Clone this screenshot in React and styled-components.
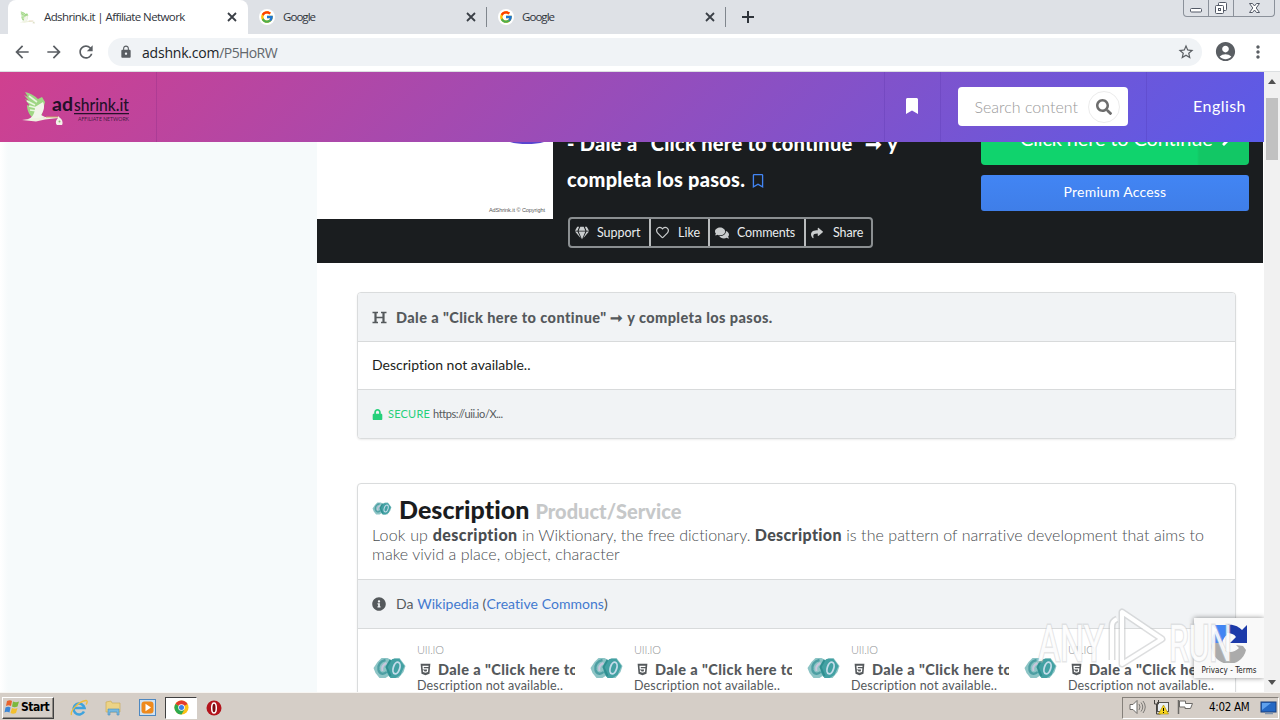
import React from 'react';
import styled, { createGlobalStyle } from 'styled-components';
import {
  FaBookmark,
  FaRegBookmark,
  FaSearch,
  FaGem,
  FaRegHeart,
  FaComments,
  FaShare,
  FaChevronRight,
  FaLock,
  FaInfoCircle,
  FaHtml5,
} from 'react-icons/fa';
import {
  MdArrowBack,
  MdArrowForward,
  MdRefresh,
  MdLock,
  MdStarBorder,
  MdAccountCircle,
  MdMoreVert,
} from 'react-icons/md';
import { FcGoogle } from 'react-icons/fc';

const GlobalStyle = createGlobalStyle`
  * {
    box-sizing: border-box;
  }

  body {
    margin: 0;
    overflow: hidden;
    font-family: Lato, 'Liberation Sans', sans-serif;
    font-variant-ligatures: none;
  }

  svg {
    display: block;
    flex: none;
  }
`;

const Screen = styled.div`
  display: flex;
  flex-direction: column;
  width: 1280px;
  height: 720px;
  overflow: hidden;
  background: #fff;
`;

const Text = styled.span`
  font-family: ${({ $font }) => $font || 'inherit'};
  font-size: ${({ $size }) => $size}px;
  font-weight: ${({ $weight }) => $weight || 400};
  letter-spacing: ${({ $ls }) => $ls || 0}px;
  color: ${({ $color }) => $color || 'inherit'};
  white-space: nowrap;
`;

/* browser chrome */

const TabStrip = styled.div`
  display: flex;
  height: 34px;
  flex: none;
  padding-left: 8px;
  background: #dee1e6;
`;

const Tab = styled.div`
  display: flex;
  align-items: center;
  width: ${({ $active }) => ($active ? 240 : 239)}px;
  padding: 0 9px 0 11px;
  border-radius: 8px 8px 0 0;
  background: ${({ $active }) => ($active ? '#fff' : 'transparent')};
  color: #2f343b;

  > ${Text} {
    padding-bottom: 1px;
  }
`;

const TabIcon = styled.span`
  display: flex;
  align-items: center;
  justify-content: center;
  width: 16px;
  height: 16px;
  margin-right: ${({ $gap }) => $gap}px;
  border-radius: 50%;
  background: #fff;
`;

const TabClose = styled.span`
  margin-left: auto;
`;

const TabDivider = styled.div`
  width: 1px;
  height: 20px;
  margin: 7px 0 0 -1px;
  background: #80868d;
`;

const NewTab = styled.div`
  display: flex;
  align-items: center;
  margin-left: 15px;
  color: #2f343b;
`;

const WindowButtons = styled.div`
  display: flex;
  height: 17px;
  margin: 0 5px 0 auto;
  border: 1px solid #8b919a;
  border-top: 0;
  border-radius: 0 0 4px 4px;
`;

const WindowButton = styled.div`
  display: flex;
  align-items: center;
  justify-content: center;
  width: ${({ $w }) => $w}px;

  & + & {
    border-left: 1px solid #8b919a;
  }
`;

const Toolbar = styled.div`
  display: flex;
  align-items: center;
  height: 38px;
  flex: none;
  padding: 0 12px 2px;
  border-bottom: 1px solid #dcdfe1;
  color: #5a5e63;
  gap: 12px;
`;

const AddressBar = styled.div`
  display: flex;
  align-items: center;
  flex: 1;
  height: 28px;
  padding: 0 7px 0 11px;
  border-radius: 14px;
  background: #f0f3f6;
`;

const ProfileIcon = styled(MdAccountCircle)`
  margin-right: -1px;
`;

const Url = styled.div`
  flex: 1;
  margin-left: 9px;
  color: #202428;
`;

/* page */

const Viewport = styled.div`
  display: flex;
  height: 620px;
  flex: none;
  position: relative;
`;

const Page = styled.div`
  display: flex;
  flex-direction: column;
  width: 1264px;
  height: 620px;
  overflow: hidden;
`;

const Header = styled.header`
  display: flex;
  align-items: center;
  height: 70px;
  flex: none;
  background: linear-gradient(135deg, #d0408f 0%, #5a5be8 100%);
  color: #fff;
`;

const Brand = styled.div`
  display: flex;
  width: 157px;
  height: 70px;
  padding: 17px 0 0 20px;
  border-right: 1px solid rgba(80, 20, 110, 0.16);
`;

const HeaderCell = styled.div`
  display: flex;
  align-items: center;
  justify-content: ${({ $end }) => ($end ? 'flex-end' : 'center')};
  width: ${({ $w }) => $w}px;
  height: 70px;
  padding: 0 ${({ $end }) => ($end ? 18 : 2)}px 2px 0;
  margin-left: ${({ $push }) => ($push ? 'auto' : 0)};
  border-left: 1px solid rgba(60, 30, 140, 0.16);

  > ${Text} {
    padding-bottom: 2px;
  }
`;

const SearchBox = styled.div`
  display: flex;
  align-items: center;
  justify-content: space-between;
  width: 170px;
  height: 39px;
  padding: 1px 8px 0 17px;
  border-radius: 4px;
  background: #fff;
`;

const SearchButton = styled.div`
  display: flex;
  align-items: center;
  justify-content: center;
  width: 32px;
  height: 32px;
  border: 1px solid #ececec;
  border-radius: 50%;
  color: #6d6d6d;
`;

const Body = styled.div`
  display: flex;
  height: 550px;
  overflow: hidden;
`;

const Aside = styled.aside`
  width: 317px;
  flex: none;
  background: linear-gradient(90deg, #fff 0, #f6fafb 8px);
`;

const Main = styled.main`
  width: 947px;
  flex: none;
`;

const Hero = styled.section`
  display: flex;
  align-items: flex-start;
  width: 946px;
  height: 121px;
  overflow: hidden;
  background: #1a1d1f;
  color: #fff;
`;

const Cover = styled.div`
  display: flex;
  flex-direction: column;
  align-items: flex-end;
  justify-content: space-between;
  width: 236px;
  height: 77px;
  padding: 0 8px 6px 0;
  background: #fff;
`;

const CoverArc = styled.svg`
  margin-right: 1px;
`;

const HeroText = styled.div`
  width: 428px;
  padding-left: 14px;
`;

const HeroTitle = styled.h1`
  margin: -16px 0 0;
  line-height: 36px;
`;

const TitleRow = styled.div`
  display: flex;
  align-items: center;
  height: 36px;

  > ${Text} {
    padding-bottom: 2px;
  }

  svg {
    margin: 2px 0 0 1px;
  }
`;

const ActionGroup = styled.div`
  display: flex;
  width: 305px;
  height: 31px;
  margin: 19px 0 0 1px;
  border: 2px solid #8b8f91;
  border-radius: 4px;
`;

const Action = styled.div`
  display: flex;
  align-items: center;
  width: ${({ $w }) => $w}px;
  padding-left: 5px;
  gap: ${({ $gap }) => $gap}px;
  color: #e9ecee;

  svg {
    color: #c9cccd;
  }

  & + & {
    border-left: 2px solid #b9bcbd;
  }
`;

const HeroButtons = styled.div`
  width: 268px;
`;

const ContinueButton = styled.div`
  display: flex;
  width: 268px;
  height: 56px;
  margin: -33px 0 10px;
  padding: 2px 0 0 39px;
  align-items: center;
  gap: 5px;
  border-radius: 4px;
  overflow: hidden;
  background: linear-gradient(90deg, #10d36d 216px, #12c765 218px);
`;

const PremiumButton = styled.div`
  display: flex;
  align-items: center;
  justify-content: center;
  height: 36px;
  padding-bottom: 3px;
  border-radius: 3px;
  background: linear-gradient(#4285f4, #3f7ee8);
`;

const Card = styled.section`
  width: 879px;
  margin: ${({ $top }) => $top}px 0 0 40px;
  border: 1px solid #dadcdd;
  border-radius: 4px;
  overflow: hidden;
  background: #fff;
  box-shadow: 0 1px 2px rgba(0, 0, 0, 0.08);
  color: #55595c;
`;

const CardRow = styled.div`
  display: flex;
  align-items: center;
  height: ${({ $h }) => $h}px;
  padding: 0 14px;
  background: ${({ $muted }) => ($muted ? '#f1f3f5' : '#fff')};

  & + & {
    border-top: 1px solid #d8dadb;
  }

  > ${Text} {
    padding-bottom: ${({ $lift }) => $lift || 0}px;
  }
`;

const RowIcon = styled.span`
  margin-right: ${({ $gap }) => $gap}px;
`;

const Summary = styled.div`
  height: 95px;
  padding: 9px 14px 0;
`;

const SummaryTitle = styled.div`
  display: flex;
  align-items: baseline;
  height: 32px;
  line-height: 32px;

  svg {
    align-self: flex-start;
    margin: 9px 7px 0 0;
  }
`;

const SummaryLine = styled.div`
  height: 19px;
  line-height: 19px;
  white-space: nowrap;
  color: #4a4e51;
`;

const SourceRow = styled(CardRow)`
  border-top: 1px solid #d8dadb;
  border-bottom: 1px solid #d8dadb;
`;

const RelatedGrid = styled.div`
  display: grid;
  grid-template-columns: repeat(4, 217px);
  height: 80px;
  padding: 12px 0 0 14px;
`;

const Related = styled.article`
  display: flex;

  > svg {
    margin: 16px 10px 0 0;
  }
`;

const RelatedText = styled.div`
  display: flex;
  flex-direction: column;
  width: 158px;
  overflow: hidden;
`;

const RelatedHost = styled.div`
  display: flex;
  height: 18px;
  line-height: 17px;
`;

const RelatedTitle = styled.div`
  display: flex;
  align-items: center;
  height: 20px;
  padding-left: 2px;
  gap: 6px;
`;

const RelatedBody = styled.div`
  display: flex;
  height: 15px;
  line-height: 13px;
`;

const ScrollBar = styled.div`
  display: flex;
  flex-direction: column;
  align-items: center;
  justify-content: space-between;
  width: 16px;
  height: 620px;
  padding: 7px 0 7px;
  background: #f1f1f1;
`;

const ScrollTrack = styled.div`
  flex: 1;
  width: 12px;
  padding-top: 14px;
`;

const ScrollThumb = styled.div`
  height: 62px;
  background: #c1c1c1;
`;

const CaptchaBadge = styled.div`
  position: absolute;
  top: 546px;
  left: 1194px;
  display: flex;
  flex-direction: column;
  align-items: center;
  width: 70px;
  height: 60px;
  padding-top: 5px;
  gap: 3px;
  background: #f9f9f9;
  box-shadow: 0 0 5px rgba(0, 0, 0, 0.45);
  clip-path: inset(-6px 0 -6px -6px);
`;

const Watermark = styled.svg`
  position: absolute;
  top: 532px;
  left: 1030px;
`;

/* taskbar */

const TaskBar = styled.div`
  display: flex;
  align-items: center;
  height: 28px;
  flex: none;
  padding: 2px 1px 0 2px;
  border-top: 1px solid #f7f5f2;
  background: #d5cec7;
`;

const StartButton = styled.div`
  display: flex;
  align-items: center;
  width: 52px;
  height: 22px;
  padding: 0 0 1px 1px;
  border: 1px solid;
  border-color: #fff #404040 #404040 #fff;
  box-shadow: inset -1px -1px 0 #8f8a84;
`;

const TaskItem = styled.div`
  display: flex;
  align-items: center;
  justify-content: center;
  width: ${({ $w }) => $w}px;
  height: 22px;
  margin-left: ${({ $ml }) => $ml}px;
  border: 1px solid ${({ $active }) => ($active ? '#404040' : 'transparent')};
  border-right-color: ${({ $active }) => ($active ? '#fff' : 'transparent')};
  border-bottom-color: ${({ $active }) => ($active ? '#fff' : 'transparent')};
  background: ${({ $active }) => ($active ? '#fff' : 'transparent')};
`;

const Tray = styled.div`
  display: flex;
  align-items: center;
  width: 157px;
  height: 22px;
  margin-left: auto;
  padding-left: 6px;
  border: 1px solid;
  border-color: #85807a #fff #fff #85807a;
`;

const TraySlot = styled.div`
  display: flex;
  width: ${({ $w }) => $w}px;
  padding-bottom: 1px;
`;

const UI_FONT = "'Open Sans', 'Noto Sans', sans-serif";
const TAHOMA = "'DejaVu Sans Condensed', 'DejaVu Sans', sans-serif";

const Stork = ({ width, height }) => (
  <svg width={width} height={height} viewBox="0 0 44 36">
    <path d="M4 2c5 1 10 4 13 7l4-2 3 5-3 12c0 3-3 5-7 5-5-2-8-8-8-14l3 1-5-7 4 2-5-6 4 2z" fill="#9fd684" />
    <path d="M6 11l8 4M8 16l8 2M8 6l8 6M9 20l7 1" stroke="#e9f6df" strokeWidth="1.6" />
    <path d="M14 17l8-5c2 4 1 9-2 13l4 2-10 4-7-2c4-1 7-5 7-12z" fill="#f2f4ea" />
    <path d="M1 30l14-2 9-1 13 0v1l-13 1.500-9 2z" fill="#eef2df" />
    <path d="M25 27h12" stroke="#c9a36a" strokeWidth="1" />
    <path d="M37 26l2 2c3 2 3 6 2 7h-5c-2-2-1-5 1-7z" fill="#f4f1ea" />
    <circle cx="38.500" cy="31.500" r="1" fill="#8bbf6f" />
  </svg>
);

const Logo = () => (
  <svg width="114" height="37" viewBox="0 0 114 37">
    <g transform="translate(1 1)">
      <Stork width={44} height={36} />
    </g>
    <g fill="#241029" fontFamily="Lato, sans-serif">
      <text x="32" y="22" fontSize="18" fontWeight="700" textLength="21" lengthAdjust="spacingAndGlyphs">ad</text>
      <text x="54" y="22" fontSize="18" fontWeight="500" textLength="55" lengthAdjust="spacingAndGlyphs">shrink.it</text>
      <path d="M54 24h55v1.200H54z" />
      <text x="58" y="32" fontSize="5.500" fontWeight="400" fillOpacity=".8" textLength="51" lengthAdjust="spacingAndGlyphs">AFFILIATE NETWORK</text>
    </g>
  </svg>
);

const Knot = ({ width, height }) => (
  <svg width={width} height={height} viewBox="0 0 32 22" fill="none">
    <path d="M0 11l4-6 4-4h6l4 2 3-2h5l6 8-2 6-5 6h-7l-3-2-3 2H6l-4-5z" fill="#8cc4c5" />
    <path d="M14 7l5-5h7l5 7-4 9-5 3h-5l-4-6z" fill="#43a1a3" />
    <path d="M12 3c-5 1-8 5-7 10 1 4 5 5 8 2" stroke="#4d9fa3" strokeWidth="2.400" />
    <path d="M13 6c-4 2-5 5-4 8" stroke="#c9c6dc" strokeWidth="2" />
    <ellipse cx="23" cy="11" rx="3.200" ry="6" transform="rotate(18 23 11)" stroke="#c4dcea" strokeWidth="1.800" />
    <path d="M17 3l-4 7 4 9" stroke="#2f8f90" strokeWidth="2" />
  </svg>
);

const Close = () => (
  <svg width="14" height="14" viewBox="0 0 14 14">
    <path d="M3 3l8 8M11 3l-8 8" stroke="#3a3f46" strokeWidth="1.800" />
  </svg>
);

const SerifH = () => (
  <svg width="15" height="13" viewBox="0 0 15 13" fill="none" stroke="#55595c">
    <path d="M.5 1.500h5.500M9 1.500h5.500M.5 11.500h5.500M9 11.500h5.500" strokeWidth="1.400" />
    <path d="M3.500 1v11M11.500 1v11" strokeWidth="2.200" />
    <path d="M3.500 6.500h8" strokeWidth="1.600" />
  </svg>
);

const related = [1, 2, 3, 4];

const BrowserTabs = () => (
  <TabStrip>
    <Tab $active>
      <TabIcon $gap={9}>
        <Stork width={17} height={15} />
      </TabIcon>
      <Text $font={UI_FONT} $size={11.5} $ls={-0.6}>Adshrink.it | Affiliate Network</Text>
      <TabClose><Close /></TabClose>
    </Tab>
    <Tab>
      <TabIcon $gap={8}><FcGoogle size={14} /></TabIcon>
      <Text $font={UI_FONT} $size={11.5} $ls={-0.95}>Google</Text>
      <TabClose><Close /></TabClose>
    </Tab>
    <TabDivider />
    <Tab>
      <TabIcon $gap={8}><FcGoogle size={14} /></TabIcon>
      <Text $font={UI_FONT} $size={11.5} $ls={-0.95}>Google</Text>
      <TabClose><Close /></TabClose>
    </Tab>
    <TabDivider />
    <NewTab>
      <svg width="14" height="14" viewBox="0 0 14 14">
        <path d="M7 1v12M1 7h12" stroke="#2f343b" strokeWidth="2" />
      </svg>
    </NewTab>
    <WindowButtons>
      <WindowButton $w={24}>
        <svg width="14" height="14" viewBox="0 0 14 14">
          <rect x="1.500" y="7.500" width="11" height="3.500" rx="1" fill="#fff" stroke="#535966" />
        </svg>
      </WindowButton>
      <WindowButton $w={25}>
        <svg width="14" height="14" viewBox="0 0 14 14" fill="#fff" stroke="#535966">
          <rect x="4.500" y="1.500" width="8" height="8" rx="1" />
          <rect x="1.500" y="4.500" width="8" height="8" rx="1" />
          <rect x="4.500" y="7.500" width="2" height="2" />
        </svg>
      </WindowButton>
      <WindowButton $w={41}>
        <svg width="13" height="12" viewBox="0 0 13 12">
          <path d="M1.500 1.500h3L6.500 4l2-2.500h3L8.200 6l3.300 4.500h-3L6.500 8l-2 2.500h-3L4.800 6z" fill="#fff" stroke="#535966" />
        </svg>
      </WindowButton>
    </WindowButtons>
  </TabStrip>
);

const BrowserToolbar = () => (
  <Toolbar>
    <MdArrowBack size={20} />
    <MdArrowForward size={20} />
    <MdRefresh size={20} />
    <AddressBar>
      <MdLock size={14} />
      <Url>
        <Text $font={UI_FONT} $size={14} $ls={-0.2}>adshnk.com</Text>
        <Text $font={UI_FONT} $size={14} $ls={-0.6} $color="#62676c">/P5HoRW</Text>
      </Url>
      <MdStarBorder size={18} />
    </AddressBar>
    <ProfileIcon size={23} />
    <MdMoreVert size={20} />
  </Toolbar>
);

const SiteHeader = () => (
  <Header>
    <Brand>
      <Logo />
    </Brand>
    <HeaderCell $w={56} $push>
      <FaBookmark size={16} />
    </HeaderCell>
    <HeaderCell $w={206}>
      <SearchBox>
        <Text $size={16} $weight={300} $color="#999">Search content</Text>
        <SearchButton><FaSearch size={16} /></SearchButton>
      </SearchBox>
    </HeaderCell>
    <HeaderCell $w={118} $end>
      <Text $size={16} $ls={0.45}>English</Text>
    </HeaderCell>
  </Header>
);

const HeroSection = () => (
  <Hero>
    <Cover>
      <CoverArc width="34" height="3" viewBox="0 0 34 3">
        <path d="M0 0h34c-9 2.800-25 2.800-34 0z" fill="#5a45cf" />
      </CoverArc>
      <Text $font="'Liberation Sans', sans-serif" $size={5.5} $ls={-0.05} $color="#555">AdShrink.it © Copyright</Text>
    </Cover>
    <HeroText>
      <HeroTitle>
        <TitleRow>
          <Text $size={20} $weight={900} $ls={0.27}>- Dale a "Click here to continue" ➞ y</Text>
        </TitleRow>
        <TitleRow>
          <Text $size={20} $weight={900} $ls={0.25}>completa los pasos.&nbsp;</Text>
          <FaRegBookmark size={14} color="#4285f4" />
        </TitleRow>
      </HeroTitle>
      <ActionGroup>
        <Action $w={79} $gap={8}>
          <FaGem size={14} />
          <Text $size={12.5} $ls={-0.05}>Support</Text>
        </Action>
        <Action $w={59} $gap={9}>
          <FaRegHeart size={13} />
          <Text $size={12.5}>Like</Text>
        </Action>
        <Action $w={96} $gap={8}>
          <FaComments size={14} />
          <Text $size={12.5} $ls={-0.15}>Comments</Text>
        </Action>
        <Action $w={67} $gap={10}>
          <FaShare size={12} />
          <Text $size={12.5} $ls={-0.1}>Share</Text>
        </Action>
      </ActionGroup>
    </HeroText>
    <HeroButtons>
      <ContinueButton>
        <Text $size={20} $weight={400} $ls={-0.15}>Click here to Continue</Text>
        <FaChevronRight size={18} />
      </ContinueButton>
      <PremiumButton><Text $size={14} $ls={0.22}>Premium Access</Text></PremiumButton>
    </HeroButtons>
  </Hero>
);

const ContentCard = () => (
  <Card $top={29}>
    <CardRow $h={48} $muted>
      <RowIcon $gap={9}><SerifH /></RowIcon>
      <Text $size={14.5} $weight={900} $ls={0.42}>Dale a "Click here to continue" ➞ y completa los pasos.</Text>
    </CardRow>
    <CardRow $h={48} $lift={2}>
      <Text $size={14} $color="#1c1e20">Description not available..</Text>
    </CardRow>
    <CardRow $h={49} $lift={1} $muted>
      <RowIcon $gap={5}><FaLock size={11} color="#25d07a" /></RowIcon>
      <Text $size={11} $ls={0.2} $color="#25d07a">SECURE&nbsp;</Text>
      <Text $size={11} $ls={-0.42}>https://uii.io/X...</Text>
    </CardRow>
  </Card>
);

const DescriptionCard = () => (
  <Card $top={44}>
    <Summary>
      <SummaryTitle>
        <Knot width={20} height={13} />
        <Text $size={25} $weight={900} $ls={0.04} $color="#1a1c1e">Description&nbsp;</Text>
        <Text $size={20} $weight={900} $ls={0} $color="#c6c8c9">Product/Service</Text>
      </SummaryTitle>
      <SummaryLine>
        <Text $size={16} $weight={300} $ls={0.2}>Look up </Text>
        <Text $size={16} $weight={900} $ls={0.42}>description</Text>
        <Text $size={16} $weight={300} $ls={-0.02}> in Wiktionary, the free dictionary. </Text>
        <Text $size={16} $weight={900} $ls={0.36}>Description</Text>
        <Text $size={16} $weight={300} $ls={0.05}> is the pattern of narrative development that aims to</Text>
      </SummaryLine>
      <SummaryLine>
        <Text $size={16} $weight={300} $ls={0.02}>make vivid a place, object, character</Text>
      </SummaryLine>
    </Summary>
    <SourceRow $h={50} $lift={1} $muted>
      <RowIcon $gap={10}><FaInfoCircle size={14} /></RowIcon>
      <Text $size={14} $ls={0.08}>
        Da <Text $size={14} $color="#4379cf">Wikipedia</Text> (<Text $size={14} $ls={0.05} $color="#4379cf">Creative Commons</Text>)
      </Text>
    </SourceRow>
    <RelatedGrid>
      {related.map((id) => (
        <Related key={id}>
          <Knot width={35} height={22} />
          <RelatedText>
            <RelatedHost><Text $size={11} $weight={300} $ls={-0.2} $color="#909395">UII.IO</Text></RelatedHost>
            <RelatedTitle>
              <FaHtml5 size={13} />
              <Text $size={14.5} $weight={900} $ls={0.42}>Dale a "Click here to continue"</Text>
            </RelatedTitle>
            <RelatedBody><Text $size={12.5} $ls={0.17}>Description not available..</Text></RelatedBody>
          </RelatedText>
        </Related>
      ))}
    </RelatedGrid>
  </Card>
);

const Overlays = () => (
  <>
    <CaptchaBadge>
      <svg width="38" height="40" viewBox="0 0 38 40">
        <path d="M17 2c7-1 12 2 15 5l5-5v18H20l6-6c-2-3-5-4-9-4z" fill="#1c3aa9" />
        <path d="M2 20C2 13 4 9 7 7L2 2h15v10c-2 1-4 4-5 8z" fill="#4285f4" />
        <path d="M2 20h10c0 8 9 13 17 5l-3-3 7 1 3 4A17 17 0 0 1 2 20z" fill="#ababab" />
      </svg>
      <Text $font={TAHOMA} $size={8} $ls={0.05} $color="#222">Privacy - Terms</Text>
    </CaptchaBadge>
    <Watermark width="234" height="70" viewBox="0 0 234 70">
      <g
        fill="#fff"
        fillOpacity=".9"
        stroke="#c6c8ca"
        strokeOpacity=".45"
        strokeWidth="3"
        paintOrder="stroke"
        fontFamily="Roboto, sans-serif"
        fontSize="50"
        fontWeight="400"
      >
        <text x="8" y="57" textLength="66" lengthAdjust="spacingAndGlyphs">ANY</text>
        <text x="139" y="57" textLength="63" lengthAdjust="spacingAndGlyphs">RUN</text>
      </g>
      <g fill="none" strokeLinejoin="round">
        <path d="M82 56V22q0-5 5-7M92 8v52l40-25z" stroke="#c6c8ca" strokeOpacity=".6" strokeWidth="7" />
        <path d="M82 56V22q0-5 5-7M92 8v52l40-25z" stroke="#fff" strokeWidth="4" />
      </g>
    </Watermark>
  </>
);

const Taskbar = () => (
  <TaskBar>
    <StartButton>
      <svg width="17" height="16" viewBox="0 0 17 16">
        <path d="M3 2c2-1 4-1 5 0L7 7C5 6 4 6 2 7z" fill="#e8632c" />
        <path d="M9 2.500c2 1 4 1 6 0l-1.500 5c-2 1-4 1-5.500 0z" fill="#7cb83c" />
        <path d="M1.500 8.500c2-1 3.500-1 5 0l-1 5c-2-1-3.500-1-5 0z" fill="#3b86d6" />
        <path d="M8 9c2 1 4 1 5.500 0l-1.500 5c-2 1-4 1-5.500 0z" fill="#f3bf2e" />
      </svg>
      <Text $font={TAHOMA} $size={12} $weight={700} $ls={-0.5} $color="#000">Start</Text>
    </StartButton>
    <TaskItem $w={30} $ml={10}>
      <svg width="18" height="18" viewBox="0 0 18 18" fill="none">
        <path d="M14 12.500A5.500 5.500 0 1 1 14.500 9H5" stroke="#3fa3dd" strokeWidth="2.600" />
        <path d="M1.500 16C0 13 7 3 16 1.500c2 0 1 3 0 4" stroke="#eebd3b" strokeWidth="1.300" />
      </svg>
    </TaskItem>
    <TaskItem $w={30} $ml={4}>
      <svg width="17" height="17" viewBox="0 0 17 17">
        <path d="M1 3l5-1 1 2h8v9H1z" fill="#ecd386" stroke="#c9a94d" strokeWidth=".6" />
        <path d="M3 16v-6h11v6h-2v-3H5v3z" fill="#77b9de" stroke="#4a8fbd" strokeWidth=".6" />
      </svg>
    </TaskItem>
    <TaskItem $w={30} $ml={4}>
      <svg width="17" height="17" viewBox="0 0 17 17">
        <rect x=".5" y=".5" width="16" height="16" fill="#cfe2f3" stroke="#4e88c0" />
        <rect x="2.500" y="2.500" width="12" height="12" rx="3" fill="#ef8a1d" />
        <path d="M6.500 4.800v7.400l5.500-3.700z" fill="#fff" />
      </svg>
    </TaskItem>
    <TaskItem $w={32} $ml={3} $active>
      <svg width="15" height="15" viewBox="0 0 16 16">
        <circle cx="8" cy="8" r="7.500" fill="#fbc116" />
        <path d="M8 8L1.500 4.250A7.500 7.500 0 0 1 14.500 4.250z" fill="#e33b2e" />
        <path d="M8 8L1.500 4.250A7.500 7.500 0 0 0 8 15.500l3-5z" fill="#2da94f" />
        <circle cx="8" cy="8" r="3.500" fill="#fff" />
        <circle cx="8" cy="8" r="2.700" fill="#3f7fe8" />
      </svg>
    </TaskItem>
    <TaskItem $w={30} $ml={2}>
      <svg width="16" height="16" viewBox="0 0 16 16">
        <circle cx="8" cy="8" r="7.500" fill="#b3141c" />
        <ellipse cx="8" cy="8" rx="2.300" ry="5" fill="#7c0a10" stroke="#fff" strokeWidth="1.500" />
      </svg>
    </TaskItem>
    <Tray>
      <TraySlot $w={24}>
        <svg width="17" height="16" viewBox="0 0 17 16">
          <path d="M1 5.500h3l4-4v13l-4-4H1z" fill="#fff" stroke="#6c6a67" />
          <path d="M10 5q2 3 0 6M12 3.500q3.500 4.500 0 9M14 2q4.500 6 0 12" fill="none" stroke="#7b7976" />
        </svg>
      </TraySlot>
      <TraySlot $w={24}>
        <svg width="17" height="16" viewBox="0 0 17 16">
          <rect x="4.500" y="3.500" width="11" height="9" fill="#e9eef2" stroke="#55534f" />
          <path d="M1.500 1v4h4V1M3.500 5v10h4" fill="none" stroke="#44423f" />
          <path d="M10.500 6l5 9h-10z" fill="#f7d51d" stroke="#a88a00" strokeWidth=".6" />
          <path d="M10.500 9v3M10.500 13v1" stroke="#000" />
        </svg>
      </TraySlot>
      <TraySlot $w={32}>
        <svg width="17" height="16" viewBox="0 0 17 16">
          <path d="M1.500 1v14" stroke="#6c6a67" strokeWidth="1.500" />
          <path d="M2.500 2h6v2.500h7l-2 5H8V8H2.500z" fill="#fff" stroke="#6c6a67" />
        </svg>
      </TraySlot>
      <TraySlot $w={51}>
        <Text $font={TAHOMA} $size={11.5} $ls={-0.3} $color="#000">4:02 AM</Text>
      </TraySlot>
      <svg width="17" height="14" viewBox="0 0 17 14">
        <rect x="1" y="1" width="15" height="10" fill="#2468c4" stroke="#1b3f7c" />
        <path d="M2 2h9L2 9z" fill="#5fa0ec" />
        <path d="M5 12.500h8" stroke="#7e93ad" strokeWidth="1.500" />
      </svg>
    </Tray>
  </TaskBar>
);

const App = () => {
  return (
    <Screen>
      <GlobalStyle />
      <BrowserTabs />
      <BrowserToolbar />
      <Viewport>
        <Page>
          <SiteHeader />
          <Body>
            <Aside />
            <Main>
              <HeroSection />
              <ContentCard />
              <DescriptionCard />
            </Main>
          </Body>
        </Page>
        <ScrollBar>
          <svg width="8" height="5" viewBox="0 0 8 5"><path d="M0 5l4-5 4 5z" fill="#505050" /></svg>
          <ScrollTrack><ScrollThumb /></ScrollTrack>
          <svg width="8" height="5" viewBox="0 0 8 5"><path d="M0 0l4 5 4-5z" fill="#505050" /></svg>
        </ScrollBar>
        <Overlays />
      </Viewport>
      <Taskbar />
    </Screen>
  );
};

export default App;
